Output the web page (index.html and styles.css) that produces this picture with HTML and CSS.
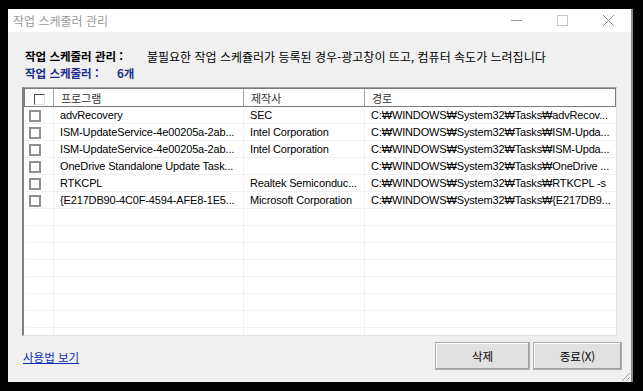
FILE: index.html
```html
<!DOCTYPE html>
<html lang="ko">
<head>
  <meta charset="UTF-8">
  <title>작업 스케줄러 관리</title>
  <link rel="stylesheet" href="styles.css">
</head>
<body>
  <div class="window">
    <div class="titlebar">
      <span class="title">작업 스케줄러 관리</span>
      <div class="caption">
        <span class="cap-btn"><svg width="11" height="11" viewBox="0 0 11 11"><path d="M0 5.5h11" stroke="#9a9a9a" stroke-width="1"/></svg></span>
        <span class="cap-btn"><svg width="11" height="11" viewBox="0 0 11 11"><rect x="0.5" y="0.5" width="10" height="10" fill="none" stroke="#c8c8c8" stroke-width="1"/></svg></span>
        <span class="cap-btn"><svg width="11" height="11" viewBox="0 0 11 11"><path d="M0 0L11 11M11 0L0 11" stroke="#8a8a8a" stroke-width="1"/></svg></span>
      </div>
    </div>

    <div class="client">
      <div class="info">
        <div class="info-row">
          <span class="info-label">작업 스케줄러 관리 :</span>
          <span class="info-text">불필요한 작업 스케쥴러가 등록된 경우-광고창이 뜨고, 컴퓨터 속도가 느려집니다</span>
        </div>
        <div class="info-row count-row">
          <span class="info-label">작업 스케줄러 :</span>
          <span class="count-value">6개</span>
        </div>
      </div>

      <div class="listview">
        <table class="task-table">
          <colgroup>
            <col class="col-check">
            <col class="col-name">
            <col class="col-maker">
            <col class="col-path">
          </colgroup>
          <thead>
            <tr>
              <th class="cell-check"><span class="check check-head"></span></th>
              <th>프로그램</th>
              <th>제작사</th>
              <th>경로</th>
            </tr>
          </thead>
          <tbody>
            <tr>
              <td class="cell-check"><span class="check"></span></td>
              <td>advRecovery</td>
              <td>SEC</td>
              <td>C:₩WINDOWS₩System32₩Tasks₩advRecov...</td>
            </tr>
            <tr>
              <td class="cell-check"><span class="check"></span></td>
              <td>ISM-UpdateService-4e00205a-2ab...</td>
              <td>Intel Corporation</td>
              <td>C:₩WINDOWS₩System32₩Tasks₩ISM-Upda...</td>
            </tr>
            <tr>
              <td class="cell-check"><span class="check"></span></td>
              <td>ISM-UpdateService-4e00205a-2ab...</td>
              <td>Intel Corporation</td>
              <td>C:₩WINDOWS₩System32₩Tasks₩ISM-Upda...</td>
            </tr>
            <tr>
              <td class="cell-check"><span class="check"></span></td>
              <td>OneDrive Standalone Update Task...</td>
              <td></td>
              <td>C:₩WINDOWS₩System32₩Tasks₩OneDrive ...</td>
            </tr>
            <tr>
              <td class="cell-check"><span class="check"></span></td>
              <td>RTKCPL</td>
              <td>Realtek Semiconduc...</td>
              <td>C:₩WINDOWS₩System32₩Tasks₩RTKCPL -s</td>
            </tr>
            <tr>
              <td class="cell-check"><span class="check"></span></td>
              <td>{E217DB90-4C0F-4594-AFE8-1E5...</td>
              <td>Microsoft Corporation</td>
              <td>C:₩WINDOWS₩System32₩Tasks₩{E217DB9...</td>
            </tr>
            <tr class="empty"><td></td><td></td><td></td><td></td></tr>
            <tr class="empty"><td></td><td></td><td></td><td></td></tr>
            <tr class="empty"><td></td><td></td><td></td><td></td></tr>
            <tr class="empty"><td></td><td></td><td></td><td></td></tr>
            <tr class="empty"><td></td><td></td><td></td><td></td></tr>
            <tr class="empty"><td></td><td></td><td></td><td></td></tr>
            <tr class="empty"><td></td><td></td><td></td><td></td></tr>
            <tr class="empty"><td></td><td></td><td></td><td></td></tr>
          </tbody>
        </table>
      </div>

      <div class="footer">
        <a class="help-link" href="#">사용법 보기</a>
        <div class="buttons">
          <button class="btn btn-delete">삭제</button>
          <button class="btn btn-close">종료(X)</button>
        </div>
      </div>
    </div>
    <span class="grip"></span>
  </div>
</body>
</html>
```

FILE: styles.css
```css
body{
  margin: 0;
  background: #000;
  font-family: "Noto Sans CJK KR", "Liberation Sans", sans-serif;
}
.window{
  position: relative;
  width: 625px;
  height: 373px;
  margin: 9px 0 0 8px;
  background: #f0f0f0;
  border-right: 2px solid #8c8c8c;
  box-sizing: border-box;
  display: flex;
  flex-direction: column;
}

/* title bar */
.titlebar{
  height: 23px;
  background: #fff;
  display: flex;
  align-items: center;
  justify-content: space-between;
}
.title{
  padding-left: 5px;
  font-size: 12px;
  color: #9a9a9a;
}
.caption{
  display: flex;
  height: 100%;
}
.cap-btn{
  width: 46px;
  display: flex;
  align-items: center;
  justify-content: center;
}

/* client area */
.client{
  flex: 1;
  padding: 16px 0 0 14px;
  display: flex;
  flex-direction: column;
}
.info{
  padding-left: 3px;
}
.info-row{
  display: flex;
  font-size: 11.5px;
  line-height: 17px;
  color: #000;
}
.info-label{
  font-weight: bold;
  width: 122px;
}
.info-text{
  font-size: 12px;
}
.count-row{
  color: #1b2d8c;
}
.count-row .info-label{
  width: 92px;
}
.count-value{
  font-weight: bold;
}

/* list view */
.listview{
  margin-top: 5px;
  width: 595px;
  height: 249px;
  background: #fff;
  border-left: 2px solid #828282;
  border-top: 1px solid #a0a0a0;
  border-right: 1px solid #e3e3e3;
  border-bottom: 1px solid #e3e3e3;
  box-sizing: border-box;
  overflow: hidden;
}
.task-table{
  width: 100%;
  table-layout: fixed;
  border-collapse: collapse;
  font-family: "Liberation Sans", "Noto Sans CJK KR", sans-serif;
  font-size: 11px;
  letter-spacing: -0.15px;
  color: #000;
}
.col-check{ width: 29px; }
.col-name{ width: 190px; }
.col-maker{ width: 121px; }
.task-table th{
  height: 17px;
  padding: 0 0 0 7px;
  text-align: left;
  font-weight: normal;
  font-family: "Noto Sans CJK KR", sans-serif;
  font-size: 11px;
  letter-spacing: 0;
  color: #333;
  background: #fff;
  border-top: 1px solid #7a7a7a;
  border-bottom: 1px solid #7a7a7a;
  border-left: 1px solid #a5a5a5;
}
.task-table th:first-child{ border-left: 1px solid #7a7a7a; }
.task-table th:last-child{ border-right: 1px solid #7a7a7a; }
.task-table td{
  height: 16px;
  padding: 0 0 0 6px;
  white-space: nowrap;
  overflow: hidden;
  border-bottom: 1px solid #f0f0f0;
  border-left: 1px solid #f0f0f0;
}
.task-table td:first-child{ border-left: none; }
.task-table th.cell-check{
  padding: 0;
  text-align: center;
}
.task-table td.cell-check{
  padding: 0 0 0 4px;
}
.check{
  display: inline-block;
  width: 12px;
  height: 12px;
  border: 2px solid #8f8f8f;
  background: #fff;
  box-sizing: border-box;
  vertical-align: middle;
}
.check-head{
  width: 11px;
  height: 11px;
  border-width: 1px;
  border-color: #4a4a4a #e0e0e0 #e0e0e0 #4a4a4a;
}

/* footer */
.footer{
  display: flex;
  align-items: center;
  justify-content: space-between;
  padding: 6px 9px 0 1px;
}
.help-link{
  font-size: 11.5px;
  color: #0b2fb0;
  text-decoration: underline;
  margin-top: 2px;
}
.buttons{
  display: flex;
  gap: 3px;
}
.btn{
  height: 28px;
  background: #e1e1e1;
  border: 1px solid #adadad;
  box-shadow: inset -1px -1px 0 #a0a0a0, inset 1px 1px 0 #fff;
  font-family: "Noto Sans CJK KR", sans-serif;
  font-size: 11.5px;
  color: #000;
  padding: 0;
}
.btn-delete{ width: 95px; }
.btn-close{ width: 89px; }

/* resize grip in the corner */
.grip{
  position: absolute;
  right: 1px;
  bottom: 1px;
  width: 10px;
  height: 10px;
  background: repeating-linear-gradient(135deg, transparent 0 2px, #a8a8a8 2px 3px);
  clip-path: polygon(100% 0, 100% 100%, 0 100%);
}
```
